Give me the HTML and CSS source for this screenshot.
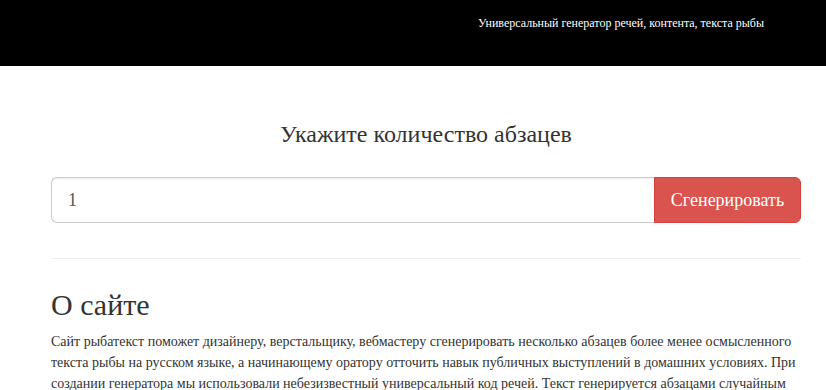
FILE: index.html
```html
<!DOCTYPE html>
<html lang="ru">
<head>
    <meta charset="UTF-8">
    <meta name="viewport" content="width=device-width, initial-scale=1.0">
    <title>Рыбатекст — генератор текста</title>
    <link rel="stylesheet" href="styles.css">
</head>
<body>
    <!-- Шапка -->
    <header class="shapka">
        <div class="shapka-tekst">Универсальный генератор речей, контента, текста рыбы</div>
    </header>

    <main class="kontejner">
        <!-- Форма генерации -->
        <form class="forma">
            <h3 class="zagolovok-formy">Укажите количество абзацев</h3>
            <div class="gruppa">
                <input type="text" class="pole" value="1">
                <button type="button" class="knopka">Сгенерировать</button>
            </div>
        </form>

        <hr class="razdelitel">

        <!-- О сайте -->
        <section class="o-sajte">
            <h2>О сайте</h2>
            <p>Сайт рыбатекст поможет дизайнеру, верстальщику, вебмастеру сгенерировать несколько абзацев более менее осмысленного текста рыбы на русском языке, а начинающему оратору отточить навык публичных выступлений в домашних условиях. При создании генератора мы использовали небезизвестный универсальный код речей. Текст генерируется абзацами случайным образом от двух до десяти предложений в абзаце, что позволяет сделать текст более привлекательным и живым для визуально-слухового восприятия.</p>
        </section>
    </main>
</body>
</html>
```

FILE: styles.css
```css
:root {
    --krasnyj: #d9534f;
    --tekst: #333;
    --granica: #ccc;
}

* {
    margin: 0;
    padding: 0;
    box-sizing: border-box;
}

body {
    font-family: "Liberation Serif", "Times New Roman", serif;
    font-size: 14px;
    line-height: 1.42857;
    color: var(--tekst);
    background: #fff;
}

.shapka {
    background: #000;
    height: 66px;
    display: flex;
    justify-content: flex-end;
    padding: 15px 62px 0 0;
}

.shapka-tekst {
    color: #fff;
    font-size: 12px;
    line-height: 16px;
}

.kontejner {
    width: 750px;
    margin-left: 51px;
}

.forma {
    padding-top: 55px;
}

.zagolovok-formy {
    font-size: 24px;
    font-weight: normal;
    line-height: 1.1;
    text-align: center;
    margin-bottom: 30px;
}

.gruppa {
    display: flex;
    height: 46px;
}

.pole {
    flex: 1;
    border: 1px solid var(--granica);
    border-right: none;
    border-radius: 6px 0 0 6px;
    padding: 10px 16px;
    font-family: inherit;
    font-size: 18px;
    color: #555;
    box-shadow: inset 0 1px 1px rgba(0,0,0,0.075);
    outline: none;
}

.knopka {
    width: 147px;
    background: var(--krasnyj);
    border: 1px solid #d43f3a;
    border-radius: 0 6px 6px 0;
    color: #fff;
    font-family: inherit;
    font-size: 18px;
    cursor: pointer;
}

.razdelitel {
    border: 0;
    border-top: 1px solid #eee;
    margin: 35px 0 29px;
}

.o-sajte h2 {
    font-size: 30px;
    font-weight: normal;
    line-height: 1.1;
    margin-bottom: 10px;
}

.o-sajte p {
    font-size: 14px;
    line-height: 21px;
}
```
